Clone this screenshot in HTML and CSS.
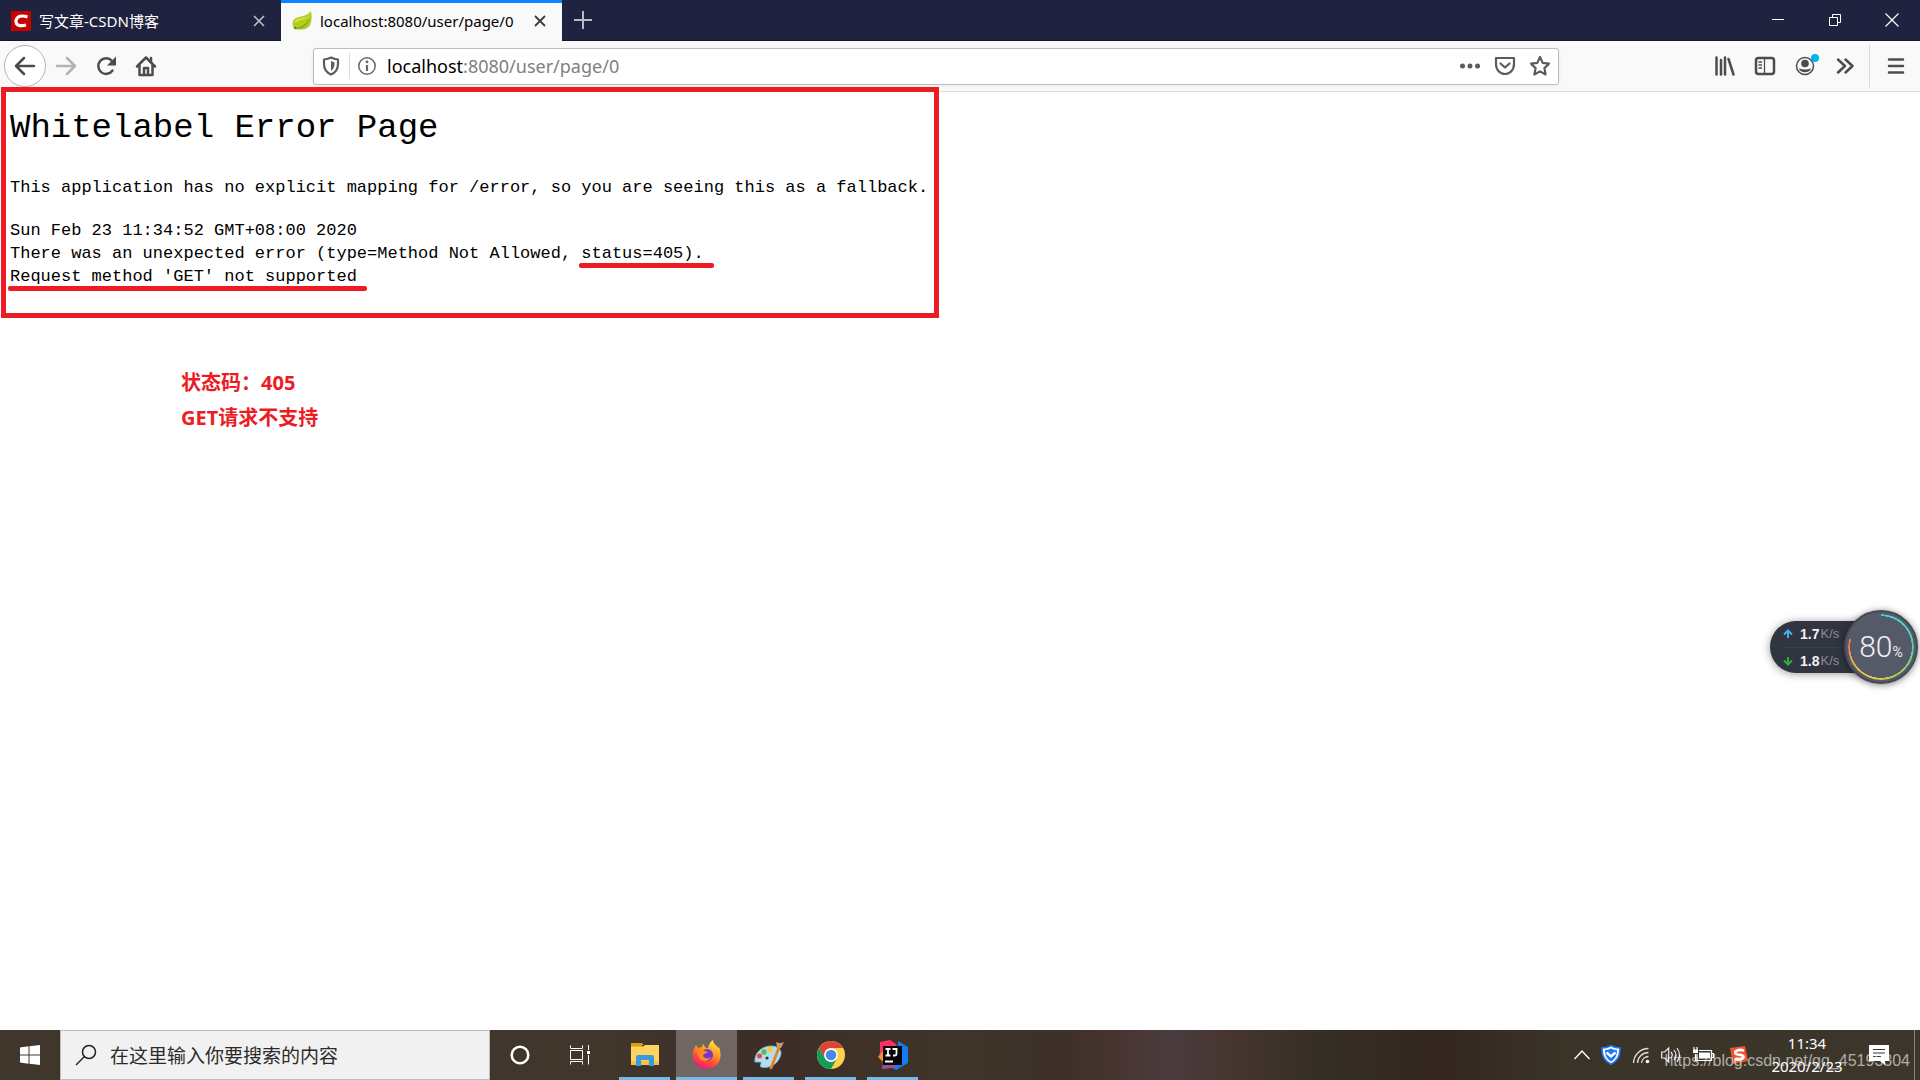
FILE: index.html
```html
<!DOCTYPE html>
<html lang="zh-CN">
<head>
<meta charset="utf-8">
<title>localhost:8080/user/page/0</title>
<link rel="stylesheet" href="styles.css">
</head>
<body>
<header class="browser">
  <div class="tabbar">
    <div class="tab">
      <svg class="favicon" viewBox="0 0 20 20"><rect width="20" height="20" fill="#c90000"/><path d="M16.500 6C11 4 6 5 5 9.500c-.6 5 4 6 10 4.500" fill="none" stroke="#fff" stroke-width="3.200"/></svg>
      <span class="tab-title">写文章-CSDN博客</span>
      <button class="tab-close" aria-label="关闭标签页"><svg width="12" height="12" viewBox="0 0 12 12"><path d="M1 1l10 10M11 1L1 11" stroke="currentColor" stroke-width="1.500"/></svg></button>
    </div>
    <div class="tab tab-active">
      <svg class="favicon" viewBox="0 0 20 20"><path d="M19 0c1 6 1 12-2 15.500C14 19 8 19 3 18 0 16 0 11 2 8.500 5 4.500 15 6.500 19 0z" fill="#b6cb22"/><path d="M2 17.500C8 16.500 14 14 17.500 7 17 13 12 18 5 18z" fill="#7fae1a"/><path d="M3 9c5-3 12-1 15-6-2 6-9 5-15 9z" fill="#d3de4a"/><circle cx="3.200" cy="17" r="1.200" fill="#4c8a20"/></svg>
      <span class="tab-title">localhost:8080/user/page/0</span>
      <button class="tab-close" aria-label="关闭标签页"><svg width="12" height="12" viewBox="0 0 12 12"><path d="M1 1l10 10M11 1L1 11" stroke="currentColor" stroke-width="1.800"/></svg></button>
    </div>
    <button class="new-tab" aria-label="新建标签页"><svg width="18" height="18" viewBox="0 0 18 18"><path d="M9 0v18M0 9h18" stroke="currentColor" stroke-width="2"/></svg></button>
    <div class="window-controls">
      <button aria-label="最小化"><svg width="14" height="14" viewBox="0 0 14 14"><path d="M1 6.500h12" stroke="#fff"/></svg></button>
      <button aria-label="还原"><svg width="14" height="14" viewBox="0 0 14 14"><path d="M1.500 4.500h8v8h-8zM4.500 4V1.500h8v8H10" fill="none" stroke="#fff"/></svg></button>
      <button aria-label="关闭"><svg width="14" height="14" viewBox="0 0 14 14"><path d="M.5.5l13 13M13.500.5l-13 13" stroke="#fff" stroke-width="1.200"/></svg></button>
    </div>
  </div>
  <div class="toolbar">
    <nav class="nav">
      <button class="back" aria-label="后退"><svg width="22" height="22" viewBox="0 0 22 22"><path d="M20 11H2M10 3l-8 8 8 8" class="line"/></svg></button>
      <button class="forward" aria-label="前进"><svg width="22" height="22" viewBox="0 0 22 22"><path d="M2 11h18M12 3l8 8-8 8" class="line"/></svg></button>
      <button aria-label="重新加载"><svg width="22" height="22" viewBox="0 0 22 22"><path d="M17.500 15.500A7.800 7.800 0 1 1 17 6" class="line"/><path d="M21 1.500v9h-9z" fill="#4c4c4c"/></svg></button>
      <button aria-label="主页"><svg width="22" height="22" viewBox="0 0 22 22"><path d="M2 11.500L11 2.500l9 9M4.500 10v10h13V10" class="line"/><path d="M9 20v-7h4v7M16 3v4" class="line"/></svg></button>
    </nav>
    <div class="urlbar">
      <svg class="url-icon" width="20" height="20" viewBox="0 0 20 20"><path d="M3 3.500Q7 3 10 1.500q3 1.500 7 2V8c0 5-2.500 8.500-7 10.500C5.500 16.500 3 13 3 8z" fill="none" stroke="#5c5c5c" stroke-width="2.200" stroke-linejoin="round"/><path d="M10 5v10c2.500-2 3.500-4 3.500-8.500z" fill="#5c5c5c"/></svg>
      <span class="separator"></span>
      <svg class="url-icon" width="20" height="20" viewBox="0 0 20 20"><circle cx="10" cy="10" r="8.200" fill="none" stroke="#666" stroke-width="1.500"/><path d="M10 9v6" stroke="#666" stroke-width="2.200"/><circle cx="10" cy="5.900" r="1.400" fill="#666"/></svg>
      <a class="address" href="http://localhost:8080/user/page/0"><span class="host">localhost</span>:8080/user/page/0</a>
      <button aria-label="页面操作"><svg width="22" height="22" viewBox="0 0 22 22"><g fill="#5c5c5c"><circle cx="3.500" cy="11" r="2.500"/><circle cx="11" cy="11" r="2.500"/><circle cx="18.500" cy="11" r="2.500"/></g></svg></button>
      <button aria-label="保存到 Pocket"><svg width="22" height="22" viewBox="0 0 22 22"><path d="M2 3h18v6c0 6-4 10-9 10S2 15 2 9zM6.500 8.500L11 12.500l4.500-4" fill="none" stroke="#5c5c5c" stroke-width="2.200" stroke-linejoin="round" stroke-linecap="round"/></svg></button>
      <button aria-label="添加书签"><svg width="22" height="22" viewBox="0 0 22 22"><path d="M11 2l2.700 5.900 6.300.8-4.600 4.400 1.200 6.400L11 16.400l-5.600 3.100 1.200-6.400L2 8.700l6.300-.8z" fill="none" stroke="#5c5c5c" stroke-width="2.200" stroke-linejoin="round"/></svg></button>
    </div>
    <div class="tools">
      <button aria-label="书库"><svg width="22" height="22" viewBox="0 0 22 22"><path d="M2.500 2.500v17M7 5v14.500M11 2.500v17M14.500 4l5 15.500" class="line"/></svg></button>
      <button aria-label="侧栏"><svg width="22" height="22" viewBox="0 0 22 22"><rect x="2" y="3" width="18" height="16" rx="2.500" class="line"/><path d="M10.500 3v16M4.500 7H8M4.500 10H8M4.500 13H8" stroke="#4c4c4c" stroke-width="1.300"/></svg></button>
      <button class="account" aria-label="账户"><svg width="22" height="22" viewBox="0 0 22 22"><circle cx="11" cy="11" r="8.500" fill="none" stroke="#4c4c4c" stroke-width="1.500"/><circle cx="11" cy="8.500" r="3.800" fill="#4c4c4c"/><path d="M5 13.500q6 2 12 0c-1 5-11 5-12 0z" fill="#4c4c4c"/></svg></button>
      <button aria-label="更多工具"><svg width="22" height="22" viewBox="0 0 22 22"><path d="M4 4.500l7 6.500-7 6.500M11.500 4.500l7 6.500-7 6.500" class="line"/></svg></button>
      <span class="separator tall"></span>
      <button aria-label="打开菜单"><svg width="22" height="22" viewBox="0 0 22 22"><path d="M4 4.500h14M4 11h14M4 17.500h14" class="line"/></svg></button>
    </div>
  </div>
</header>

<main class="page">
  <section class="error">
    <h1>Whitelabel Error Page</h1>
    <p>This application has no explicit mapping for /error, so you are seeing this as a fallback.</p>
    <div>Sun Feb 23 11:34:52 GMT+08:00 2020</div>
    <div>There was an unexpected error (type=Method Not Allowed, <span class="marked">status=405).</span></div>
    <div><span class="marked">Request method 'GET' not supported</span></div>
  </section>
  <aside class="note">
    <p>状态码：405</p>
    <p>GET请求不支持</p>
  </aside>
  <div class="monitor">
    <div class="rates">
      <div class="rate"><svg width="10" height="10" viewBox="0 0 10 10"><path d="M5 9V2M1 5.500l4-4 4 4" fill="none" stroke="#45aef0" stroke-width="2"/></svg><b>1.7</b><span>K/s</span></div>
      <div class="rate"><svg width="10" height="10" viewBox="0 0 10 10"><path d="M5 1v7M1 4.500l4 4 4-4" fill="none" stroke="#2eae3c" stroke-width="2"/></svg><b>1.8</b><span>K/s</span></div>
    </div>
    <div class="gauge"><span>80</span><small>%</small></div>
  </div>
</main>

<footer class="taskbar">
  <button class="start" aria-label="开始"><svg width="20" height="20" viewBox="0 0 20 20"><path d="M0 2.500l8.500-1.200v8.200H0zM9.500 1.200L20 0v9.500H9.500zM0 10.500h8.500v8.200L0 17.500zM9.500 10.500H20V20L9.500 18.800z" fill="#fff"/></svg></button>
  <label class="search">
    <svg width="22" height="22" viewBox="0 0 22 22"><circle cx="14" cy="8" r="6.500" fill="none" stroke="#222" stroke-width="1.500"/><path d="M9.500 12.500L1 21" stroke="#222" stroke-width="1.500"/></svg>
    <input type="text" placeholder="在这里输入你要搜索的内容" aria-label="搜索">
  </label>
  <button class="task-tool" aria-label="Cortana"><svg width="20" height="20" viewBox="0 0 20 20"><circle cx="10" cy="10" r="8.300" fill="none" stroke="#fff" stroke-width="2.500"/></svg></button>
  <button class="task-tool" aria-label="任务视图"><svg width="20" height="20" viewBox="0 0 20 20"><path d="M.5.500v3h12v-3M.5 19.500v-3h12v3M.5 5.500h12v9H.5zM18.500 0v5M18.500 10v9.500" fill="none" stroke="#fff"/><path d="M17 6h3v3h-3z" fill="#fff"/></svg></button>
  <div class="apps">
    <button class="app" aria-label="文件资源管理器"><svg width="30" height="30" viewBox="0 0 30 30"><path d="M1 3h11l2 2h-2v3H1z" fill="#dc9b0a"/><path d="M1 6.500h12L15 5h14v20H1z" fill="#ffd45e"/><path d="M1 21h28v4H1z" fill="#f5c04a"/><path d="M6 26V17q0-2 2-2h14q2 0 2 2v9h-5v-6h-8v6z" fill="#3a9ade"/></svg></button>
    <button class="app app-active" aria-label="Firefox"><svg width="30" height="30" viewBox="0 0 30 30"><defs><linearGradient id="fox" x1=".8" y1="0" x2=".3" y2="1"><stop offset="0" stop-color="#fff23c"/><stop offset=".4" stop-color="#ff9a20"/><stop offset=".7" stop-color="#ff4a3e"/><stop offset="1" stop-color="#f5117e"/></linearGradient></defs><path d="M4 5l2 3 4-1 1-3 3 4h2c1-4 2-6 5-8 0 4 4 5 5 8l1-1c3 8 2 16-5 20-7 3-14 2-18-3C-1 18 0 11 4 5z" fill="url(#fox)"/><circle cx="15" cy="15" r="6" fill="#7338cf"/><path d="M4 10c4-1 6-1 9 1l3 1c-2 2-4 1-5 4 2 3 5 3 8 1-3 6-12 5-13-2z" fill="#ff8b1f"/></svg></button>
    <button class="app" aria-label="画图"><svg width="32" height="30" viewBox="0 0 32 30"><path d="M2 22C1 13 9 6 18 6c8 0 12 5 9 11-3 8-12 12-19 10-2-1 2-5-1-5z" fill="#b5dcf0" stroke="#7ab5d5" stroke-width="1"/><circle cx="6.500" cy="16" r="2.500" fill="#e44b3c"/><circle cx="11" cy="12" r="2.700" fill="#59bd43"/><circle cx="17" cy="9.500" r="2.700" fill="#ffc727"/><circle cx="14" cy="18" r="1.600" fill="#333"/><path d="M27 5L18 28" stroke="#e58220" stroke-width="2.800" stroke-linecap="round"/><path d="M23 2q4 2 8 0l-3 6-4-1z" fill="#c99c69"/></svg></button>
    <button class="app" aria-label="Chrome"><svg width="30" height="30" viewBox="0 0 30 30"><circle cx="15" cy="15" r="14" fill="#ffd04a"/><path d="M2.900 8A14 14 0 0 1 27.100 8H15a7 7 0 0 0-6 10.500z" fill="#db4437"/><path d="M2.900 8A14 14 0 0 0 15 29l6-10.500a7 7 0 0 1-12 0z" fill="#109d59"/><circle cx="15" cy="15" r="6.700" fill="#fff"/><circle cx="15" cy="15" r="5.300" fill="#4a86ee"/></svg></button>
    <button class="app" aria-label="IntelliJ IDEA"><svg width="30" height="30" viewBox="0 0 30 30"><path d="M2 2l10-2 6 4 2 8-16 9-3-5 1-4z" fill="#fe2f64"/><path d="M0 17l5-6 4 8-4 3z" fill="#f98b28"/><path d="M20 1l10 6v16l-12 7-8-5 9-12z" fill="#177bf0"/><path d="M5 19h9l4 8-4 1-10 1z" fill="#9b509a"/><path d="M5 6h19v19H5z" fill="#050505"/><path d="M7.500 9h5M7.500 15.500h5M10 9v6.500M14.500 9h4v5q0 1.500-1.500 1.500h-2" fill="none" stroke="#fff" stroke-width="1.800"/><path d="M7 21.500h8" stroke="#fff" stroke-width="2"/></svg></button>
  </div>
  <div class="tray">
    <button aria-label="显示隐藏的图标"><svg width="16" height="20" viewBox="0 0 16 20"><path d="M.5 14L8 6l7.500 8" fill="none" stroke="#fff" stroke-width="1.400"/></svg></button>
    <button aria-label="电脑管家"><svg width="20" height="20" viewBox="0 0 20 20"><path d="M1 3q5 0 9-2.200Q14 3 19 3c0 9-3 13-9 16.200C4 16 1 12 1 3z" fill="#fff" stroke="#1f78f0" stroke-width="1.600"/><path d="M4 5q3 0 6-1.500Q13 5 16 5c0 6-2 9-6 11.500C6 14 4 11 4 5z" fill="#1f78f0"/><path d="M5.500 7.500l4.500 4 4.500-4" fill="none" stroke="#fff" stroke-width="2.400"/></svg></button>
    <button aria-label="网络"><svg width="18" height="20" viewBox="0 0 18 20"><g fill="none" stroke="#ddd" stroke-width="1.300"><path d="M1.500 18A15 15 0 0 1 16.500 3.500"/><path d="M5.500 18A11 11 0 0 1 16.500 7.500"/><path d="M9.500 18a7 7 0 0 1 7-6.500"/></g><circle cx="15.500" cy="16.500" r="1.800" fill="#fff"/></svg></button>
    <button aria-label="音量"><svg width="20" height="20" viewBox="0 0 20 20"><path d="M.7 7h3l4-4v14l-4-4h-3zM10 7q2.500 3 0 6M13 5q4 5 0 10M16 3q5 7 0 14" fill="none" stroke="#eee" stroke-width="1.200"/></svg></button>
    <button aria-label="电池"><svg width="22" height="20" viewBox="0 0 22 20"><path d="M7 5.500h12.500v10H5V9M20 8.500h1.500v4H20M3.500 9v6.500H5M2 2v3M5 2v3" fill="none" stroke="#fff" stroke-width="1.200"/><path d="M7 7.500h11v6H7zM1 4.500h5V8H1z" fill="#fff"/></svg></button>
    <button class="ime" aria-label="搜狗输入法"><svg width="20" height="20" viewBox="0 0 20 20"><path d="M1 3l15-2 3 15-15 3z" fill="#f0532d"/><path d="M15 5.500C9 4 5.500 6 6.500 8.500c1 2 7 .5 8 3 .5 2.500-4.500 3.800-9 2.500" fill="none" stroke="#fff" stroke-width="2.700"/></svg></button>
    <div class="clock"><time>11:34</time><time>2020/2/23</time></div>
    <button aria-label="通知"><svg width="20" height="22" viewBox="0 0 20 22"><path d="M0 1h20v16h-4v4l-5-4H0z" fill="#fff"/><path d="M4 5.500h12M4 9h12M4 12.500h8" stroke="#3c342a" stroke-width="1.200"/></svg></button>
    <span class="show-desktop"></span>
  </div>
  <span class="watermark">https://blog.csdn.net/qq_45193304</span>
</footer>
</body>
</html>
```
FILE: styles.css
```css
* { box-sizing: border-box; }

body {
  margin: 0;
  min-height: 100vh;
  display: flex;
  flex-direction: column;
  background: #fff;
  color: #000;
  font-family: "Noto Sans", "Noto Sans CJK SC", sans-serif;
}

button {
  display: flex;
  align-items: center;
  justify-content: center;
  padding: 0;
  border: 0;
  background: none;
  color: inherit;
  flex-shrink: 0;
}

svg { display: block; flex-shrink: 0; }

.line {
  fill: none;
  stroke: #4c4c4c;
  stroke-width: 2.5;
  stroke-linecap: round;
  stroke-linejoin: round;
}

/* Tabs */
.tabbar {
  display: flex;
  height: 41px;
  background: #20233f;
  color: #fff;
  border-bottom: 1px solid #15172e;
}

.tab {
  display: flex;
  align-items: center;
  gap: 8px;
  width: 281px;
  height: 41px;
  padding: 0 12px 0 11px;
  font-size: 15px;
  line-height: 20px;
}

.tab-active {
  background: #f9f9fa;
  color: #000;
  box-shadow: inset 0 3px #0a84ff;
}

.favicon { width: 20px; height: 20px; }
.tab-title { flex: 1; white-space: nowrap; }
.tab-close { width: 20px; height: 20px; color: #c4c5cc; }
.tab-active .tab-close { color: #3c3c3c; }
.new-tab { width: 42px; color: #b9bac5; }
.window-controls { display: flex; margin-left: auto; }
.window-controls button { width: 57px; }

/* Toolbar */
.toolbar {
  display: flex;
  align-items: center;
  height: 51px;
  background: #f9f9fa;
  border-bottom: 1px solid #dedede;
}

.nav { display: flex; align-items: center; width: 313px; padding-left: 4px; }
.nav button { width: 40px; height: 40px; }
.nav .back {
  width: 42px;
  height: 42px;
  border: 1px solid #b4b4b4;
  border-radius: 50%;
  background: #fff;
}
.forward { opacity: .4; }

.urlbar {
  display: flex;
  align-items: center;
  flex: 1;
  height: 37px;
  padding: 0 1px 0 7px;
  border: 1px solid #bcbcbc;
  border-radius: 3px;
  background: #fff;
  box-shadow: 0 1px 4px rgba(0, 0, 0, .06);
}
.urlbar button { width: 35px; height: 35px; }

.separator { width: 1px; height: 26px; margin: 0 7px 0 8px; background: #dadada; }
.separator.tall { height: 42px; margin: 0 6px 0 4px; }

.address {
  flex: 1;
  padding-left: 10px;
  color: #808080;
  font-size: 18px;
  line-height: 26px;
  text-decoration: none;
}
.host { color: #000; }

.tools { display: flex; align-items: center; width: 361px; padding-right: 4px; justify-content: flex-end; }
.tools button { width: 40px; height: 40px; }
.account { position: relative; }
.account::after {
  content: "";
  position: absolute;
  top: 8px;
  right: 6px;
  width: 8px;
  height: 8px;
  border-radius: 50%;
  background: #00b3f4;
}

/* Page */
.page { position: relative; flex: 1; }

.error {
  position: relative;
  width: 938px;
  height: 231px;
  margin: -5px 0 0 1px;
  padding: 16px 4px 0;
  border: 5px solid #ed1c24;
  font-family: "Liberation Mono", monospace;
  font-size: 17px;
  line-height: 23px;
  white-space: nowrap;
}
.error h1 {
  margin: 0 0 28px;
  font-size: 34px;
  font-weight: 400;
  line-height: 40px;
}
.error p { margin: 0 0 20px; }

.marked { position: relative; }
.marked::after {
  content: "";
  position: absolute;
  left: -2px;
  right: -10px;
  bottom: -5px;
  height: 5px;
  border-radius: 2px;
  background: #ed1c24;
}

.note {
  margin: 47px 0 0 181px;
  color: #ed1c24;
  font-size: 20px;
  font-weight: 700;
  line-height: 35px;
}
.note p { margin: 0; }

/* Network monitor */
.monitor {
  position: absolute;
  right: 2px;
  top: 518px;
  display: flex;
  align-items: center;
}
.rates {
  width: 94px;
  margin-right: -20px;
  padding-left: 13px;
  border-radius: 27px 0 0 27px;
  background: #303540;
  box-shadow: 0 1px 8px rgba(0, 0, 0, .4);
}
.rate {
  display: flex;
  align-items: center;
  gap: 1px;
  height: 26px;
  color: #fff;
  font-family: "Liberation Sans", sans-serif;
  font-size: 14px;
  line-height: 26px;
}
.rate b { margin-left: 6px; color: #f2f2f2; }
.rate span { color: #898d96; font-size: 13px; }
.rate + .rate { border-top: 1px solid #3a3f4a; }

.gauge {
  position: relative;
  display: flex;
  align-items: baseline;
  justify-content: center;
  width: 74px;
  height: 74px;
  border-radius: 50%;
  background: #545a68;
  border: 2px solid #454a56;
  box-shadow: 0 1px 7px rgba(0, 0, 0, .5);
  color: #eee;
  font-family: Roboto, sans-serif;
  font-weight: 300;
  font-size: 30px;
  line-height: 70px;
}
.gauge small { font-size: 14px; font-weight: 400; }
.gauge::before {
  content: "";
  position: absolute;
  inset: 2px;
  border-radius: 50%;
  background: conic-gradient(#43d3dc, #55cfae 25%, #a9cf54 40%, #e3cf4a 52%, #eea947 68%, #ef6a55 79%, transparent 79%);
  -webkit-mask: radial-gradient(closest-side, transparent 93%, #000 94%);
  mask: radial-gradient(closest-side, transparent 93%, #000 94%);
}

/* Taskbar */
.taskbar {
  position: relative;
  display: flex;
  height: 50px;
  background: linear-gradient(90deg, #3f372b 0, #40362c 32%, #3c2e27 40%, #40352a 50%, #3c3028 55%, #47342f 58%, #4a3c3f 61%, #46362f 64%, #352e25 69%, #33261f 75%, #3a3328 81%, #3d362b);
  color: #fff;
}
.start, .task-tool { width: 60px; }

.search {
  display: flex;
  align-items: center;
  gap: 13px;
  width: 430px;
  padding: 0 14px;
  border: 1px solid #bdbdbd;
  background: #f1f1f1;
}
.search input {
  flex: 1;
  min-width: 0;
  padding: 0;
  border: 0;
  outline: 0;
  background: none;
  font: 19px/28px "Noto Sans CJK SC", sans-serif;
}
.search input::placeholder { color: #2b2b2b; opacity: 1; }

.apps { display: flex; gap: 1px; margin-left: 4px; }
.app { position: relative; width: 61px; }
.app::after {
  content: "";
  position: absolute;
  left: 5px;
  right: 5px;
  bottom: 0;
  height: 3px;
  background: #76b9ed;
}
.app-active { background: #716762; }
.app-active::after { left: 0; right: 0; }

.tray { display: flex; align-items: center; gap: 11px; margin-left: auto; padding-right: 5px; }
.ime { margin-left: 4px; }
.clock {
  display: flex;
  flex-direction: column;
  align-items: center;
  width: 98px;
  margin: 0 2px 0 -2px;
  font-size: 15px;
  line-height: 23px;
}
.show-desktop { width: 1px; height: 50px; margin-left: 14px; background: #8b867f; }

.watermark {
  position: absolute;
  right: 10px;
  top: 19px;
  color: rgba(255, 255, 255, .6);
  font: 16px/24px "Liberation Sans", sans-serif;
}
```
